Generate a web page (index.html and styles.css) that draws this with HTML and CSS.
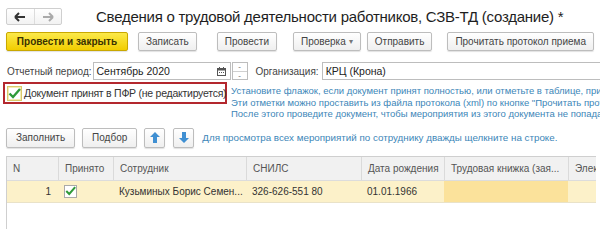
FILE: index.html
```html
<!DOCTYPE html>
<html lang="ru">
<head>
<meta charset="utf-8">
<link rel="stylesheet" href="styles.css">
</head>
<body>
<div class="page">
  <div class="header">
    <div class="nav">
      <span class="nav-btn">
        <svg width="12" height="10" viewBox="0 0 12 10"><path d="M1 5h10M1 5l4-4M1 5l4 4" stroke="#333" stroke-width="2" fill="none"/></svg>
      </span>
      <span class="nav-btn nav-btn-right">
        <svg width="12" height="10" viewBox="0 0 12 10"><path d="M1 5h10M11 5l-4-4M11 5l-4 4" stroke="#aaa" stroke-width="2" fill="none"/></svg>
      </span>
    </div>
    <div class="title">Сведения о трудовой деятельности работников, СЗВ-ТД (создание) *</div>
  </div>

  <div class="toolbar">
    <span class="btn btn-primary">Провести и закрыть</span>
    <span class="btn g10">Записать</span>
    <span class="btn g20">Провести</span>
    <span class="btn g16">Проверка <span class="caret">▾</span></span>
    <span class="btn g6">Отправить</span>
    <span class="btn g15">Прочитать протокол приема</span>
  </div>

  <div class="fields">
    <span class="label">Отчетный период:</span>
    <span class="input input-period">
      <span class="input-text">Сентябрь 2020</span>
      <span class="cal">
        <svg width="9" height="9" viewBox="0 0 9 9"><rect x="0.5" y="1.5" width="8" height="7" fill="none" stroke="#555"/><rect x="0.5" y="1.5" width="8" height="2" fill="#555"/><rect x="2" y="0" width="1" height="2" fill="#555"/><rect x="6" y="0" width="1" height="2" fill="#555"/><rect x="2" y="5" width="1" height="1" fill="#555"/><rect x="4" y="5" width="1" height="1" fill="#555"/><rect x="6" y="5" width="1" height="1" fill="#555"/></svg>
      </span>
    </span>
    <span class="spin"><span class="spin-part">-</span><span class="spin-part">-</span></span>
    <span class="label label-org">Организация:</span>
    <span class="input input-org"><span class="input-text">КРЦ (Крона)</span></span>
  </div>

  <div class="accept-row">
    <div class="accept-box">
      <span class="check check-focus">
        <svg width="13" height="11" viewBox="0 0 13 11"><path d="M1.5 5.5l3.5 3.5 7-8" stroke="#2f9a3a" stroke-width="2.4" fill="none"/></svg>
      </span>
      <span class="accept-text">Документ принят в ПФР (не редактируется)</span>
    </div>
    <div class="info">
      <div>Установите флажок, если документ принят полностью, или отметьте в таблице, принятые мероприятия.</div>
      <div>Эти отметки можно проставить из файла протокола (xml) по кнопке "Прочитать протокол приема".</div>
      <div>После этого проведите документ, чтобы мероприятия из этого документа не попадали в новые.</div>
    </div>
  </div>

  <div class="table-bar">
    <span class="btn btn-wide">Заполнить</span>
    <span class="btn btn-wide g7">Подбор</span>
    <span class="btn btn-icon g7">
      <svg width="10" height="11" viewBox="0 0 10 11"><path d="M5 0L0 5h3v6h4V5h3z" fill="#3f8fd2"/></svg>
    </span>
    <span class="btn btn-icon g8">
      <svg width="10" height="11" viewBox="0 0 10 11"><path d="M5 11L0 6h3V0h4v6h3z" fill="#3f8fd2"/></svg>
    </span>
    <span class="hint">Для просмотра всех мероприятий по сотруднику дважды щелкните на строке.</span>
  </div>

  <div class="table">
    <div class="row head">
      <div class="cell c-n">N</div>
      <div class="cell c-ok">Принято</div>
      <div class="cell c-emp">Сотрудник</div>
      <div class="cell c-snils">СНИЛС</div>
      <div class="cell c-date">Дата рождения</div>
      <div class="cell c-book">Трудовая книжка (зая...</div>
      <div class="cell c-el">Элек</div>
    </div>
    <div class="row data">
      <div class="cell c-n num">1</div>
      <div class="cell c-ok">
        <span class="check check-small">
          <svg width="11" height="10" viewBox="0 0 13 11"><path d="M1.5 5.5l3.5 3.5 7-8" stroke="#2f9a3a" stroke-width="2.4" fill="none"/></svg>
        </span>
      </div>
      <div class="cell c-emp">Кузьминых Борис Семен...</div>
      <div class="cell c-snils">326-626-551 80</div>
      <div class="cell c-date">01.01.1966</div>
      <div class="cell c-book active"></div>
      <div class="cell c-el"></div>
    </div>
  </div>
</div>
</body>
</html>
```

FILE: styles.css
```css
* { box-sizing: border-box; }
html, body { margin: 0; padding: 0; background: #fff; }
body {
  font-family: "Liberation Sans", Arial, sans-serif;
  font-size: 10px;
  color: #333;
}
.page { width: 600px; height: 229px; overflow: hidden; position: relative; }

.header { display: flex; align-items: center; padding: 8px 0 0 6px; height: 25px; }
.nav {
  display: flex; flex-shrink: 0; width: 56px; height: 17px;
  border: 1px solid #cfcfcf; border-radius: 2px;
  background: linear-gradient(#ffffff, #f2f2f2);
}
.nav-btn { flex: 1; display: flex; align-items: center; justify-content: center; }
.nav-btn-right { border-left: 1px solid #dcdcdc; }
.title {
  margin-left: 34px; font-size: 15px; letter-spacing: -0.25px;
  color: #1e1e1e; white-space: nowrap; margin-top: -1px;
}

.toolbar { display: flex; padding: 7px 0 0 6px; }
.btn {
  display: inline-flex; align-items: center; justify-content: center; flex-shrink: 0;
  height: 19px; padding: 0 7px;
  border: 1px solid #bdbdbd; border-radius: 2px;
  background: linear-gradient(#ffffff, #efefef);
  box-shadow: 0 1px 1px rgba(0,0,0,0.12);
  font-size: 10px; color: #444; white-space: nowrap;
}
.btn-wide { padding: 0 9px; height: 20px; }
.btn-primary {
  background: linear-gradient(#fbe94a, #f2cd00);
  border-color: #c9a800;
  font-weight: bold; color: #3a3200;
  width: 122px;
}
.caret { font-size: 8px; color: #777; margin-left: 3px; }
.g6 { margin-left: 6px; }
.g7 { margin-left: 7px; }
.g8 { margin-left: 8px; }
.g10 { margin-left: 10px; }
.g15 { margin-left: 15px; }
.g16 { margin-left: 16px; }
.g20 { margin-left: 20px; }

.fields { display: flex; align-items: center; padding: 11px 0 0 7px; height: 29px; }
.label { color: #444; font-size: 10px; white-space: nowrap; }
.input {
  display: flex; align-items: center; height: 18px;
  border: 1px solid #bdbdbd; background: #fff;
}
.input-text { flex: 1; padding-left: 3px; font-size: 10.5px; color: #222; white-space: nowrap; }
.input-period { width: 138px; margin-left: 1px; flex-shrink: 0; }
.cal { width: 17px; display: flex; justify-content: center; }
.spin {
  display: flex; flex-direction: column; width: 16px; height: 18px; margin-left: 1px; flex-shrink: 0;
  border: 1px solid #bdbdbd;
}
.spin-part { flex: 1; font-size: 8px; line-height: 7px; text-align: center; color: #666; }
.spin-part + .spin-part { border-top: 1px solid #d0d0d0; }
.label-org { margin-left: 8px; }
.input-org { flex: 1; margin-left: 3px; border-right: none; }

.accept-row { display: flex; padding: 2px 0 0 3px; }
.accept-box {
  display: flex; align-items: center; flex-shrink: 0;
  width: 224px; height: 22px; padding-left: 2px;
  border: 2px solid #b3282e;
}
.check {
  display: inline-flex; align-items: center; justify-content: center; flex-shrink: 0;
  width: 15px; height: 15px; border: 1px solid #a9a9a9; background: #fff;
}
.check-focus { border-color: #d9c96a; box-shadow: inset 0 0 0 1px #f4ecb4; }
.accept-text { margin-left: 2px; font-size: 10.5px; letter-spacing: -0.25px; color: #333; white-space: nowrap; }
.info {
  margin-left: 4px; padding-top: 3px;
  font-size: 9.5px; line-height: 11.5px; color: #3c86b8; white-space: nowrap; overflow: hidden;
}

.table-bar { display: flex; align-items: center; padding: 8px 0 0 6px; }
.btn-icon { width: 21px; height: 20px; padding: 0; }
.hint { margin-left: 8px; font-size: 9.8px; color: #3c86b8; white-space: nowrap; }

.table {
  margin: 8px 0 0 6px; width: 590px; height: 80px;
  border-left: 1px solid #cfcfcf; border-top: 1px solid #cfcfcf;
}
.row { display: flex; }
.head { height: 24px; background: #f1f1f1; border-bottom: 1px solid #dcdcdc; color: #555; }
.data { height: 22px; background: #fcf1c9; border-bottom: 1px solid #e9e2c8; }
.cell { display: flex; align-items: center; padding-left: 6px; white-space: nowrap; overflow: hidden; font-size: 10px; }
.head .cell + .cell { border-left: 1px solid #dadada; }
.c-n { width: 51px; }
.c-ok { width: 55px; }
.c-emp { width: 133px; }
.c-snils { width: 115px; }
.c-date { width: 83px; }
.c-book { width: 124px; }
.c-el { flex: 1; }
.num { justify-content: flex-end; padding-right: 7px; }
.active { background: #fbe29b; }
.check-small { width: 13px; height: 13px; }
.data .cell { color: #333; }
```
